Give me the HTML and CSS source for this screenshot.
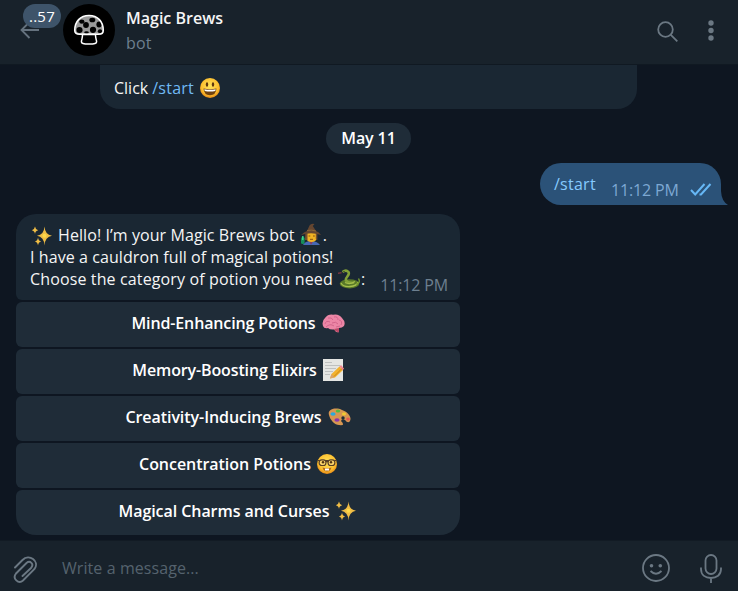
FILE: index.html
```html
<!DOCTYPE html>
<html lang="en">
<head>
<meta charset="utf-8">
<title>Magic Brews</title>
<link rel="stylesheet" href="styles.css">
</head>
<body>
<svg class="defs" width="0" height="0">
  <defs>
    <radialGradient id="face" cx=".5" cy=".4" r=".6"><stop offset="0" stop-color="#ffe45c"/><stop offset=".7" stop-color="#fdc02f"/><stop offset="1" stop-color="#e88a16"/></radialGradient>
    <symbol id="sparkles" viewBox="0 0 22 22">
      <path fill="#f0bd45" d="M13.5 1.5Q14 9.8 21 10.7Q14 11.6 13.5 20.5Q13 11.6 6 10.7Q13 9.8 13.5 1.5ZM4 1.5Q4.4 4.6 7.2 5.2Q4.4 5.8 4 9Q3.6 5.8 .8 5.2Q3.6 4.6 4 1.5ZM7 12.5Q7.4 15.9 10.2 16.5Q7.4 17.1 7 20.5Q6.6 17.1 3.8 16.5Q6.6 15.9 7 12.5Z"/>
      <circle cx="13.5" cy="10.7" r="2" fill="#ffda48"/>
    </symbol>
  </defs>
</svg>
<div class="app">
  <header class="header">
    <div class="back">
      <svg width="20" height="18" viewBox="0 0 20 18"><path d="M19 9H1.5M9.5 1L1.5 9L9.5 17" fill="none" stroke="#65727e" stroke-width="1.8"/></svg>
      <span class="unread">..57</span>
    </div>
    <svg class="avatar" width="52" height="52" viewBox="0 0 52 52">
      <circle cx="26" cy="26" r="26" fill="#000"/>
      <path d="M11.7 26.5C11.7 17.5 17.3 11.5 26 11.5S40.3 17.5 40.3 26.5C40.3 29 38.3 30.3 35.7 30.3H16.3C13.7 30.3 11.7 29 11.7 26.5Z" fill="#999"/>
      <g fill="#000"><ellipse cx="18.8" cy="17.6" rx="2.6" ry="2.2"/><ellipse cx="29.3" cy="16" rx="3" ry="2.3"/><circle cx="23" cy="21" r="2.9"/><ellipse cx="36" cy="20.5" rx="2.6" ry="2.9"/><ellipse cx="16.5" cy="26" rx="3.1" ry="2.9"/><circle cx="30" cy="25.8" r="3.1"/><ellipse cx="37" cy="27.2" rx="2.2" ry="2"/><ellipse cx="23.5" cy="28.6" rx="2.3" ry="1.4"/></g>
      <path d="M11.7 26.5C11.7 17.5 17.3 11.5 26 11.5S40.3 17.5 40.3 26.5C40.3 29 38.3 30.3 35.7 30.3H16.3C13.7 30.3 11.7 29 11.7 26.5Z" fill="none" stroke="#fff" stroke-width="1.5"/>
      <path d="M19.5 30.5C19.5 34 18.7 35.5 18.4 37.5C18.1 39.4 20.4 40 26 40S33.9 39.4 33.6 37.5C33.3 35.5 32.5 34 32.5 30.5Z" stroke="#fff" stroke-width="1.5"/>
    </svg>
    <div class="title"><div class="name">Magic Brews</div><div class="kind">bot</div></div>
    <svg class="search" width="22" height="22" viewBox="0 0 22 22"><g fill="none" stroke="#6b7883" stroke-width="1.8"><circle cx="8.5" cy="8.5" r="7.3"/><path d="M13.8 13.8L20.3 20.3"/></g></svg>
    <svg class="more" width="6" height="22" viewBox="0 0 6 22" fill="#6b7883"><circle cx="3" cy="3" r="2.7"/><circle cx="3" cy="10.5" r="2.7"/><circle cx="3" cy="18" r="2.7"/></svg>
  </header>

  <main class="chat">
    <div class="intro"><span>Click</span> <a class="cmd">/start</a>
      <svg class="smile" width="20" height="20" viewBox="0 0 20 20"><circle cx="10" cy="10" r="10" fill="url(#face)"/><ellipse cx="7" cy="6.5" rx="1.2" ry="2.2" fill="#60370e"/><ellipse cx="13" cy="6.5" rx="1.2" ry="2.2" fill="#60370e"/><path d="M3.5 10.5Q10 12 16.5 10.5Q16 17.2 10 17.2T3.5 10.5Z" fill="#70410f"/><path d="M4.3 11.2Q10 12.5 15.7 11.2L15.3 13Q10 14.2 4.7 13Z" fill="#fff"/></svg>
    </div>
    <div class="date">May 11</div>
    <div class="outgoing">
      <span class="cmd-out">/start</span><span class="time-out">11:12 PM</span>
      <svg class="checks" width="22" height="13" viewBox="0 0 22 13"><path d="M1 7L5.2 11.5L14.5 1M9.5 11.5L11 11.5L20.5 1" fill="none" stroke="#66b7f5" stroke-width="2"/></svg>
      <svg class="tail" width="8" height="18" viewBox="0 0 8 18"><path d="M0 0V18H8Q1.5 14 1 4V0Z" fill="#2b5278"/></svg>
    </div>

    <section class="message">
      <div class="line"><svg class="lead" width="22" height="22"><use href="#sparkles"/></svg><span class="t1">Hello! I’m your Magic Brews bot</span>
        <svg class="mage" width="20" height="23" viewBox="0 0 20 23"><path d="M2 22Q4 18 10 18T19 22Z" fill="#4668b4"/><path d="M8 17.5L10 22L12.5 17.5Z" fill="#8b3c60"/><path d="M5 10H16V15Q15 19 10.5 19T5 15Z" fill="#f0b323"/><path d="M4.5 9L4 17L6.5 17V10ZM16.3 9V17L14.8 16V10Z" fill="#75502f"/><path d="M7.5 13H9.3M12 13H13.8M9 16.3H12" stroke="#875010"/><path d="M0 12Q3 9 6 8L8.5 2.5Q10 .2 13.5 1L11.8 3L15 8Q18 9 20 12Q10 8.5 0 12Z" fill="#654630"/><path d="M6 7.5Q11 6.5 15 8" stroke="#8a6538" fill="none"/><rect x="0" y="14" width="3.6" height="7" rx="1.5" fill="#168d59"/><path d="M1.8 13V17" stroke="#42dc91" stroke-width="1.4"/></svg>
        <span class="dot">.</span></div>
      <div class="line"><span class="t2">I have a cauldron full of magical potions!</span></div>
      <div class="line"><span class="t3">Choose the category of potion you need</span>
        <svg class="snake" width="22" height="20" viewBox="0 0 22 20"><ellipse cx="11.5" cy="14.8" rx="9.8" ry="4.6" fill="#587928"/><path d="M4.5 3Q8 .5 10.3 2.8C13 6 6.5 8.5 8 11.5Q10 14.5 16 13.5" fill="none" stroke="#83a238" stroke-width="2.6"/><path d="M3 14Q5 18 12 17.5T20 13M7 13.5Q12 16 17 12.5" fill="none" stroke="#a6bf4c" stroke-width="1.3"/><path d="M18 15Q23 14 20.5 9.5" fill="none" stroke="#769b30" stroke-width="1.4"/><path d="M3.5 3.8L0 4.2" stroke="#a23e4a"/><circle cx="6" cy="2.6" r=".6" fill="#182010"/></svg><span>:</span><span class="time-in">11:12 PM</span></div>
    </section>

    <div class="keyboard">
      <div class="key"><span class="k1">Mind-Enhancing Potions</span><svg width="23" height="19" viewBox="0 0 23 19"><path d="M1 12Q-.5 7 3 4Q6 0 11 .7Q17-.5 20 4Q24 8 22 12Q20 14 17 14L17 18Q14 19 12 15.5Q8 16 6 14Q2 15 1 12Z" fill="#ec86a6"/><path d="M3 10Q4 6 8 8M6 4Q10 3 11 6M12 3Q16 2 16 6M4 13Q8 9 12 12M10 9Q14 7 16 10M17 6Q21 7 19 11M14 13L18 12" fill="none" stroke="#cb5c84" stroke-width=".8"/><path d="M12 15L17 14V18Q14 19 12 15Z" fill="#bb4b68"/></svg></div>
      <div class="key"><span class="k2">Memory-Boosting Elixirs</span><svg class="memo" width="21" height="22" viewBox="0 0 21 22"><path d="M0 0H20V22H0Z" fill="#e5e6e3"/><path d="M2 3.5H9M2 6.5H17M2 9.5H13M2 12.5H10M2 15.5H7" stroke="#b5b7b7" stroke-width=".8"/><path d="M7 19.5L8.5 15L16.5 7.5L20 11L12 18.5Z" fill="#f3b22c"/><path d="M16.5 7.5L18 6L21 9.5L19.5 11.5Z" fill="#ee8793"/><path d="M7 19.5L8.5 15L11.5 18.2Z" fill="#d9a46d"/><path d="M11 17.5L19 9.5" stroke="#c88519"/></svg></div>
      <div class="key"><span class="k3">Creativity-Inducing Brews</span><svg width="23" height="18" viewBox="0 0 23 18"><path d="M1 7C-1 1 8-1 14 2C20 4 24 9 22 13Q20 16 17 12Q14 10 13 13Q18 18 11 17C7 17 2 12 1 7Z" fill="#d79651"/><ellipse cx="5" cy="6" rx="2.6" ry="1.8" fill="#2aa9dc"/><ellipse cx="10" cy="3" rx="2.2" ry="1.5" fill="#51bc3e"/><ellipse cx="16" cy="6" rx="2" ry="1.4" fill="#efcb31"/><ellipse cx="20" cy="11" rx="1.8" ry="1.5" fill="#e65652"/><ellipse cx="9" cy="12" rx="2.6" ry="1.8" fill="#8b36a8"/><circle cx="15" cy="10" r="1.7" fill="#1f2c38"/></svg></div>
      <div class="key"><span class="k4">Concentration Potions</span><svg width="20" height="20" viewBox="0 0 20 20"><circle cx="10" cy="10" r="10" fill="url(#face)"/><path d="M.5 6.5H19.5M9 8Q10 7 11 8" fill="none" stroke="#594026" stroke-width="1.2"/><g fill="#fbd46b" stroke="#594026" stroke-width="1.2"><rect x="2.2" y="5.8" width="6.7" height="5.7" rx="2.5"/><rect x="11.1" y="5.8" width="6.7" height="5.7" rx="2.5"/></g><circle cx="6" cy="8.3" r="1.2" fill="#50330f"/><circle cx="14" cy="8.3" r="1.2" fill="#50330f"/><path d="M5.5 13.5Q10 15 14.5 13.5Q13.5 17.5 10 17.5T5.5 13.5Z" fill="#b56d17"/><path d="M8 14.5H12V16.5H8Z" fill="#fff"/></svg></div>
      <div class="key last"><span class="k5">Magical Charms and Curses</span><svg class="charm" width="22" height="22"><use href="#sparkles"/></svg></div>
    </div>
  </main>

  <footer class="composer">
    <svg class="clip" width="26" height="28" viewBox="0 0 26 28"><path d="M2 11.5L9.5 4C16-2.5 27 5 21.5 13L10 24.5C5.5 28.5-1 22.5 3 17.5L13.5 7C17 4 21.5 8 18 12L9.5 20" fill="none" stroke="#6b7883" stroke-width="1.9" stroke-linecap="round"/></svg>
    <span class="placeholder">Write a message...</span>
    <svg class="emoji" width="28" height="28" viewBox="0 0 28 28"><circle cx="14" cy="14" r="13" fill="none" stroke="#6b7883" stroke-width="1.8"/><circle cx="9.5" cy="11.7" r="1.8" fill="#6b7883"/><circle cx="18.3" cy="11.7" r="1.8" fill="#6b7883"/><path d="M8.5 17Q14 22.5 19.5 17" fill="none" stroke="#6b7883" stroke-width="1.8"/></svg>
    <svg class="mic" width="22" height="29" viewBox="0 0 22 29"><g fill="none" stroke="#6b7883" stroke-width="1.8"><rect x="5.5" y="1" width="11" height="19" rx="5.5"/><path d="M1 13.5V15C1 21 5.5 24 11 24S21 21 21 15V13.5M11 24V29"/></g></svg>
  </footer>
</div>
</body>
</html>
```
FILE: styles.css
```css
* { box-sizing: border-box; }
body { margin: 0; background: #0e1621; color: #f5f5f5; font: 16px/22px "Open Sans", sans-serif; }
svg { flex: none; display: block; }
.defs { position: absolute; }
.app { width: 738px; height: 591px; display: flex; flex-direction: column; overflow: hidden; }
.app span, .app a, .name, .kind, .date { white-space: nowrap; }

.header { height: 65px; flex: none; display: flex; align-items: flex-start; background: #18222b; border-bottom: 1px solid #101922; }
.back { position: relative; width: 63px; height: 64px; padding: 21px 0 0 20px; }
.unread { position: absolute; left: 23px; top: 4px; width: 38px; height: 24px; border-radius: 12px; background: #3e546a; color: #fff; font-size: 15px; letter-spacing: .2px; line-height: 24px; text-align: center; }
.avatar { margin-top: 4px; }
.title { margin: 7px 0 0 11px; flex: 1; }
.name { font-weight: 600; color: #f5f5f5; line-height: 22px; }
.kind { color: #6d7f8f; line-height: 22px; margin-top: 3px; letter-spacing: .2px; }
.search { margin: 21px 29px 0 0; }
.more { margin: 20px 24px 0 0; }

.chat { flex: 1; display: flex; flex-direction: column; }
.intro { width: 537px; height: 44px; margin-left: 100px; padding: 12px 14px 0; background: #1a2733; border-radius: 0 0 20px 20px; display: flex; gap: 4px; }
.cmd { color: #70baf5; letter-spacing: .25px; }
.smile { margin: 1px 0 0 2px; }
.date { margin: 14px 0 0 326px; width: 85px; height: 31px; border-radius: 16px; background: #1f2c38; color: #fff; font-weight: 600; text-align: center; line-height: 31px; letter-spacing: -.1px; }
.outgoing { position: relative; align-self: flex-end; margin: 9px 17px 0 0; width: 181px; height: 42px; padding: 10px 0 0 14px; border-radius: 21px 21px 0 21px; background: #2b5278; display: flex; }
.cmd-out { color: #85caff; width: 57px; letter-spacing: .25px; }
.time-out { color: #7da8d3; width: 79px; margin-top: 6px; letter-spacing: -.15px; }
.checks { margin-top: 10px; }
.tail { position: absolute; right: -7px; bottom: 0; }

.message { width: 444px; height: 86px; margin: 9px 0 0 16px; padding: 10px 12px 0 14px; border-radius: 20px 20px 6px 6px; background: #1a2733; }
.line { height: 22px; display: flex; }
.lead { margin: 1px 5px 0 1px; }
.t1 { letter-spacing: .08px; }
.t2 { letter-spacing: .08px; }
.t3 { letter-spacing: .13px; }
.mage { margin: -1px 0 0 6px; }
.dot { margin-left: 2px; }
.snake { margin: 1px 1px 0 5px; }
.time-in { color: #6d7f8f; margin: 6px 0 0 auto; letter-spacing: -.15px; }

.keyboard { width: 444px; margin: 2px 0 0 16px; display: flex; flex-direction: column; gap: 2px; }
.key { height: 45px; background: #1f2c38; border-radius: 6px; display: flex; align-items: center; justify-content: center; gap: 6px; padding-bottom: 3px; color: #fff; font-weight: 600; letter-spacing: -.13px; }
.key span { margin-top: -1px; }
.k4 { letter-spacing: -.05px; }
.k3, .k5 { letter-spacing: -.06px; }
.last { border-radius: 6px 6px 20px 20px; }

.composer { height: 51px; flex: none; display: flex; align-items: flex-start; background: #18222b; border-top: 1px solid #121b24; }
.clip { margin: 15px 0 0 13px; }
.placeholder { flex: 1; margin: 16px 0 0 23px; color: #55626e; letter-spacing: .08px; }
.emoji { margin: 13px 30px 0 0; }
.mic { margin: 13px 16px 0 0; }
```
